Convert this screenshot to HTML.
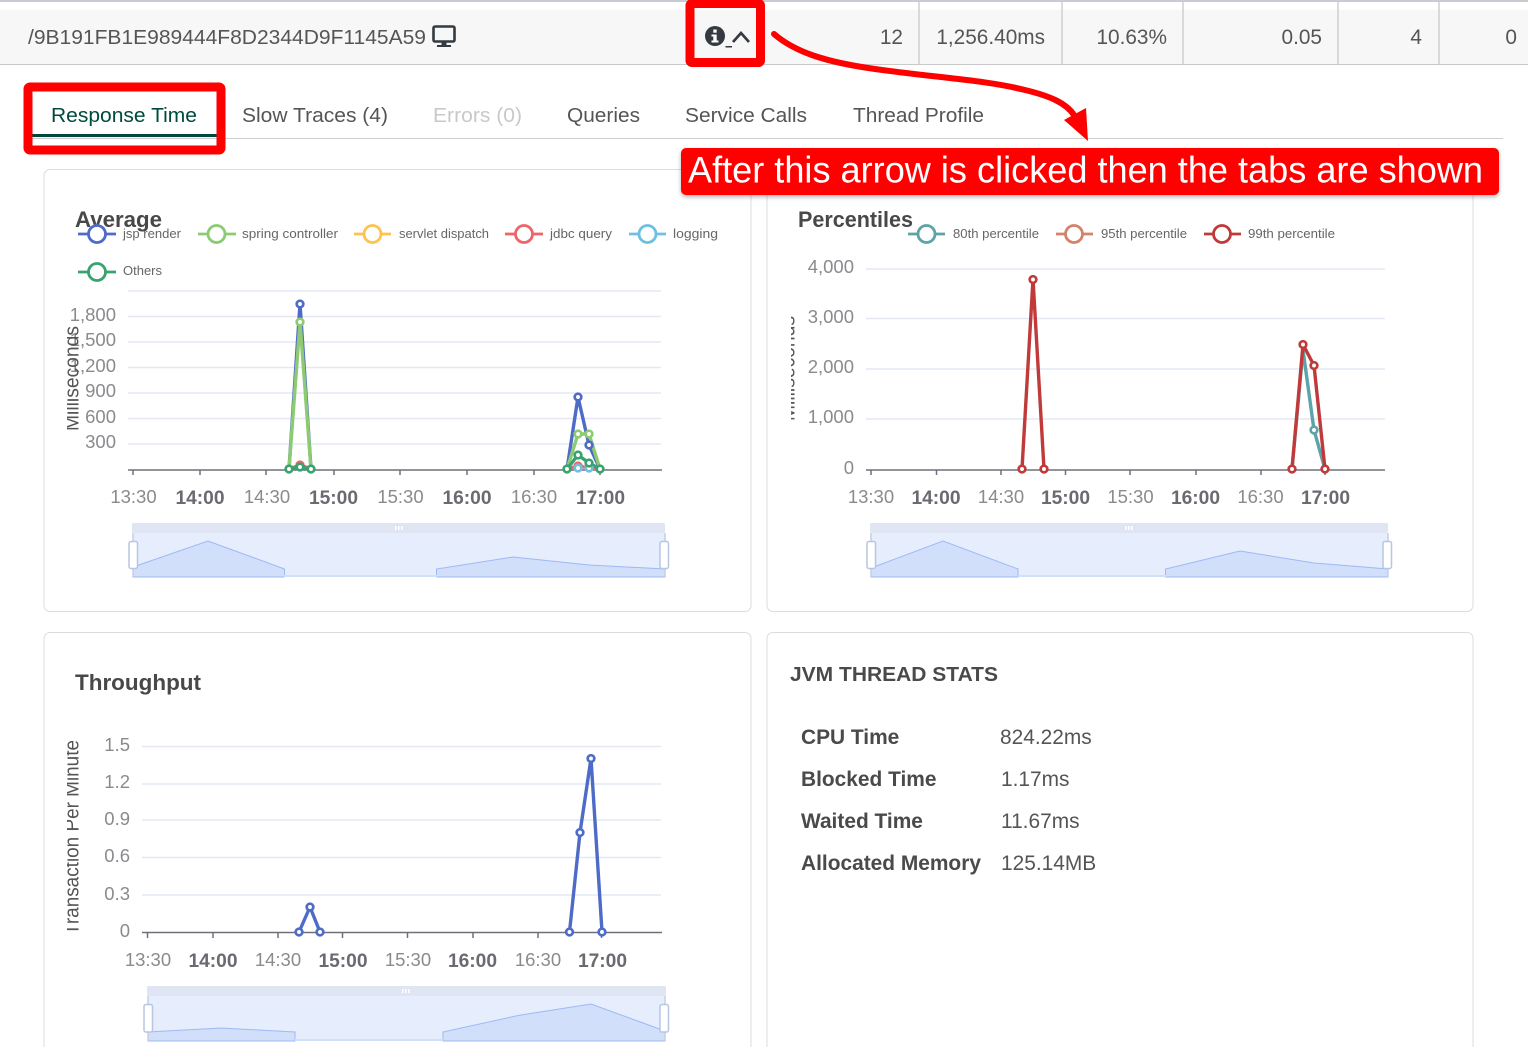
<!DOCTYPE html>
<html><head><meta charset="utf-8"><title>Transaction details</title>
<style>
html,body{margin:0;padding:0;background:#fff;width:1528px;height:1047px;overflow:hidden}
svg{display:block;font-family:"Liberation Sans",sans-serif}
.tab{font-size:20px;fill:#555}
.yl{font-size:18.5px;fill:#8a8a8f;text-anchor:end}
.xl{font-size:18.5px;fill:#8a8a8f;text-anchor:middle}
.xb{font-size:19.2px;fill:#6a6a70;font-weight:bold;text-anchor:middle}
.lg{font-size:13px;fill:#666}
.ttl{font-size:22px;font-weight:bold;fill:#484848}
.hd{font-size:20px;fill:#555}
.hv{font-size:20.8px;fill:#555;text-anchor:end}
.k{font-size:20.9px;font-weight:bold;fill:#4a4a4a}
.v{font-size:20.9px;fill:#555}
.grid{stroke:#e3e8f4;stroke-width:1.5}
.axis{stroke:#6e7079;stroke-width:1.5}
.tk{stroke:#6e7079;stroke-width:1.5}
.yt{font-size:20px;fill:#555}
.s{fill:none;stroke-width:3.4;stroke-linejoin:round}
.m circle{fill:#fff;stroke-width:2.7}
.lgi circle{fill:#fff;stroke-width:2.8}
.lgi line{stroke-width:2.8}
.bar{fill:#dfe5f2}
.body{fill:#e6edfc}
.side{stroke:#c5cfe4;stroke-width:1.5}
.area{fill:#d2dffb;stroke:#9db9f5;stroke-width:1}
.hnd{fill:#fff;stroke:#b9c6e2;stroke-width:1.5}
.grip{fill:#fff}
</style></head><body>
<svg width="1528" height="1047" viewBox="0 0 1528 1047" xmlns="http://www.w3.org/2000/svg">
<defs>
<clipPath id="c1"><rect x="67" y="300" width="30" height="150"/></clipPath>
<clipPath id="c2"><rect x="791" y="290" width="30" height="150"/></clipPath>
<clipPath id="c3"><rect x="67" y="720" width="30" height="230"/></clipPath>
<filter id="sh" x="-2%" y="-20%" width="104%" height="150%"><feDropShadow dx="0" dy="2" stdDeviation="2" flood-color="#000" flood-opacity=".3"/></filter>
</defs>

<!-- header row -->
<rect x="0" y="0" width="1528" height="2" fill="#c8ccd2"/>
<rect x="0" y="10" width="1528" height="54" fill="#f7f7f7"/>
<rect x="0" y="64" width="1528" height="1" fill="#c9c9c9"/>
<g stroke="#cfcfcf" stroke-width="1.5"><line x1="919" y1="2" x2="919" y2="64"/><line x1="1062" y1="2" x2="1062" y2="64"/><line x1="1183" y1="2" x2="1183" y2="64"/><line x1="1338" y1="2" x2="1338" y2="64"/><line x1="1439" y1="2" x2="1439" y2="64"/></g>
<text class="hd" x="28" y="44" textLength="398" lengthAdjust="spacingAndGlyphs">/9B191FB1E989444F8D2344D9F1145A59</text>
<rect x="433.5" y="26.5" width="21" height="15" rx="1.5" fill="none" stroke="#343a40" stroke-width="2.6"/>
<rect x="441.5" y="42" width="5" height="3" fill="#343a40"/><rect x="437" y="45" width="14" height="2" fill="#343a40"/>
<text class="hv" x="903" y="44">12</text>
<text class="hv" x="1045" y="44">1,256.40ms</text>
<text class="hv" x="1167" y="44">10.63%</text>
<text class="hv" x="1322" y="44">0.05</text>
<text class="hv" x="1422" y="44">4</text>
<text class="hv" x="1517" y="44">0</text>
<circle cx="715" cy="36" r="10" fill="#343a40"/>
<rect x="713.3" y="29.5" width="3.4" height="3.2" fill="#fff"/><path d="M711.5 34.5h5.2v6h1.8v2h-7v-2h1.8v-4h-1.8z" fill="#fff"/>
<rect x="725.5" y="46" width="6.5" height="1.5" fill="#343a40"/>
<polyline points="733,42 741,33 749,42" fill="none" stroke="#343a40" stroke-width="2.7"/>

<!-- tabs -->
<line x1="32" y1="138.5" x2="1503" y2="138.5" stroke="#cfcfcf" stroke-width="1"/>
<text class="tab" x="51" y="122" textLength="146" lengthAdjust="spacingAndGlyphs" style="fill:#00493e">Response Time</text>
<rect x="32" y="134" width="185" height="3" fill="#00483c"/>
<text class="tab" x="242" y="122" textLength="146" lengthAdjust="spacingAndGlyphs">Slow Traces (4)</text>
<text class="tab" x="433" y="122" textLength="89" lengthAdjust="spacingAndGlyphs" style="fill:#c9c9c9">Errors (0)</text>
<text class="tab" x="567" y="122" textLength="73" lengthAdjust="spacingAndGlyphs">Queries</text>
<text class="tab" x="685" y="122" textLength="122" lengthAdjust="spacingAndGlyphs">Service Calls</text>
<text class="tab" x="853" y="122" textLength="131" lengthAdjust="spacingAndGlyphs">Thread Profile</text>

<!-- cards -->
<g fill="#fff" stroke="#dcdcdc" stroke-width="1">
<rect x="44" y="169.500" width="707" height="442" rx="6"/>
<rect x="767" y="169.500" width="706" height="442" rx="6"/>
<rect x="44" y="632.500" width="707" height="430" rx="6"/>
<rect x="767" y="632.500" width="706" height="430" rx="6"/>
</g>

<!-- CHART 1 -->
<text class="ttl" x="75" y="227" textLength="87" lengthAdjust="spacingAndGlyphs">Average</text>
<g class="lgi">
<g stroke="#4e6bc8"><line x1="78" y1="234" x2="116" y2="234"/><circle cx="97" cy="234" r="8.5"/></g>
<g stroke="#8ccb72"><line x1="198" y1="234" x2="236" y2="234"/><circle cx="216.500" cy="234" r="8.5"/></g>
<g stroke="#fdc34f"><line x1="354" y1="234" x2="391" y2="234"/><circle cx="372.500" cy="234" r="8.5"/></g>
<g stroke="#ee6469"><line x1="505" y1="234" x2="543" y2="234"/><circle cx="524" cy="234" r="8.5"/></g>
<g stroke="#6fbfe0"><line x1="629" y1="234" x2="666" y2="234"/><circle cx="647.500" cy="234" r="8.5"/></g>
<g stroke="#37a36f"><line x1="78" y1="272" x2="116" y2="272"/><circle cx="97" cy="272" r="8.5"/></g>
</g>
<text class="lg" x="123" y="238" textLength="58" lengthAdjust="spacingAndGlyphs">jsp render</text>
<text class="lg" x="242" y="238" textLength="96" lengthAdjust="spacingAndGlyphs">spring controller</text>
<text class="lg" x="399" y="238" textLength="90" lengthAdjust="spacingAndGlyphs">servlet dispatch</text>
<text class="lg" x="550" y="238" textLength="62" lengthAdjust="spacingAndGlyphs">jdbc query</text>
<text class="lg" x="673" y="238" textLength="45" lengthAdjust="spacingAndGlyphs">logging</text>
<text class="lg" x="123" y="275" textLength="39" lengthAdjust="spacingAndGlyphs">Others</text>

<g class="grid"><line x1="128" y1="291" x2="661" y2="291"/><line x1="128" y1="316.500" x2="661" y2="316.500"/><line x1="128" y1="342" x2="661" y2="342"/><line x1="128" y1="367.500" x2="661" y2="367.500"/><line x1="128" y1="393" x2="661" y2="393"/><line x1="128" y1="418.500" x2="661" y2="418.500"/><line x1="128" y1="444" x2="661" y2="444"/></g>
<text class="yl" x="116" y="321">1,800</text><text class="yl" x="116" y="346">1,500</text><text class="yl" x="116" y="372">1,200</text><text class="yl" x="116" y="397">900</text><text class="yl" x="116" y="423">600</text><text class="yl" x="116" y="448">300</text>
<g clip-path="url(#c1)"><text class="yt" transform="translate(78.500,431) rotate(-90)" textLength="105" lengthAdjust="spacingAndGlyphs">Milliseconds</text></g>
<line class="axis" x1="128" y1="470" x2="662" y2="470"/>
<g class="tk"><line x1="133" y1="470" x2="133" y2="475"/><line x1="200" y1="470" x2="200" y2="475"/><line x1="266" y1="470" x2="266" y2="475"/><line x1="334" y1="470" x2="334" y2="475"/><line x1="400" y1="470" x2="400" y2="475"/><line x1="467" y1="470" x2="467" y2="475"/><line x1="534" y1="470" x2="534" y2="475"/><line x1="600" y1="470" x2="600" y2="475"/></g>
<text class="xl" x="133.5" y="503">13:30</text><text class="xb" x="200" y="504">14:00</text><text class="xl" x="267" y="503">14:30</text><text class="xb" x="333.500" y="504">15:00</text><text class="xl" x="400.500" y="503">15:30</text><text class="xb" x="467" y="504">16:00</text><text class="xl" x="534" y="503">16:30</text><text class="xb" x="600.500" y="504">17:00</text>

<polyline class="s" stroke="#4e6bc8" points="289,469 300,304 311,469"/>
<polyline class="s" stroke="#4e6bc8" points="567,469 578,397 589,445 600,469"/>
<polyline class="s" stroke="#8ccb72" points="289,469 300,322 311,469"/>
<polyline class="s" stroke="#8ccb72" points="567,469 578,434 589,434 600,469"/>
<polyline class="s" stroke="#ee6469" points="289,469 300,465 311,469"/>
<polyline class="s" stroke="#ee6469" points="567,469 578,466 589,468 600,469"/>
<polyline class="s" stroke="#37a36f" points="289,469 300,467 311,469"/>
<polyline class="s" stroke="#37a36f" points="567,469 578,455 589,463 600,469"/>
<g class="m">
<g stroke="#4e6bc8"><circle cx="300" cy="304" r="3.3"/><circle cx="578" cy="397" r="3.3"/><circle cx="589" cy="445" r="3.3"/></g>
<g stroke="#8ccb72"><circle cx="300" cy="322" r="3.3"/><circle cx="578" cy="434" r="3.3"/><circle cx="589" cy="434" r="3.3"/></g>
<g stroke="#ee6469"><circle cx="300" cy="465" r="3.3"/><circle cx="578" cy="466" r="3.3"/></g>
<g stroke="#6fbfe0"><circle cx="578" cy="468" r="3.3"/><circle cx="589" cy="468" r="3.3"/></g>
<g stroke="#37a36f"><circle cx="289" cy="469" r="3.3"/><circle cx="300" cy="467" r="3.3"/><circle cx="311" cy="469" r="3.3"/><circle cx="567" cy="469" r="3.3"/><circle cx="578" cy="455" r="3.3"/><circle cx="589" cy="463" r="3.3"/><circle cx="600" cy="469" r="3.3"/></g>
</g>
<rect class="bar" x="132" y="523" width="533" height="10" rx="1.5"/>
<rect class="body" x="133" y="533" width="532" height="44"/>
<polygon class="area" points="133,567 208,541 284.500,569 284.500,577 133,577"/>
<polygon class="area" points="436.500,577 436.500,569 513,557 589,565 665,569 665,577"/>
<line x1="284" y1="576" x2="437" y2="576" stroke="#d2dffb" stroke-width="2"/>
<line class="side" x1="133" y1="533" x2="133" y2="577"/><line class="side" x1="665" y1="533" x2="665" y2="577"/>
<rect class="hnd" x="129" y="541.500" width="8.5" height="27" rx="2"/><rect class="hnd" x="660" y="541.500" width="8.5" height="27" rx="2"/>
<g class="grip"><rect x="395" y="526" width="1.5" height="4"/><rect x="398" y="526" width="1.5" height="4"/><rect x="401" y="526" width="1.5" height="4"/></g>

<!-- CHART 2 -->
<text class="ttl" x="798" y="227" textLength="115" lengthAdjust="spacingAndGlyphs">Percentiles</text>
<g class="lgi">
<g stroke="#5da3a8"><line x1="908" y1="234" x2="945" y2="234"/><circle cx="926.500" cy="234" r="8.5"/></g>
<g stroke="#d4826a"><line x1="1056" y1="234" x2="1093" y2="234"/><circle cx="1074" cy="234" r="8.5"/></g>
<g stroke="#c03a3a"><line x1="1204" y1="234" x2="1241" y2="234"/><circle cx="1222" cy="234" r="8.5"/></g>
</g>
<text class="lg" x="953" y="238" textLength="86" lengthAdjust="spacingAndGlyphs">80th percentile</text>
<text class="lg" x="1101" y="238" textLength="86" lengthAdjust="spacingAndGlyphs">95th percentile</text>
<text class="lg" x="1248" y="238" textLength="87" lengthAdjust="spacingAndGlyphs">99th percentile</text>
<g class="grid"><line x1="866" y1="269" x2="1385" y2="269"/><line x1="866" y1="318.500" x2="1385" y2="318.500"/><line x1="866" y1="369" x2="1385" y2="369"/><line x1="866" y1="419" x2="1385" y2="419"/></g>
<g clip-path="url(#c2)"><text class="yt" transform="translate(794.500,421) rotate(-90)" textLength="105" lengthAdjust="spacingAndGlyphs">Milliseconds</text></g>
<text class="yl" x="854" y="273">4,000</text><text class="yl" x="854" y="323">3,000</text><text class="yl" x="854" y="373">2,000</text><text class="yl" x="854" y="423">1,000</text><text class="yl" x="854" y="474">0</text>
<line class="axis" x1="866" y1="470" x2="1385" y2="470"/>
<g class="tk"><line x1="871" y1="470" x2="871" y2="475"/><line x1="936.500" y1="470" x2="936.500" y2="475"/><line x1="1001" y1="470" x2="1001" y2="475"/><line x1="1065.500" y1="470" x2="1065.500" y2="475"/><line x1="1130" y1="470" x2="1130" y2="475"/><line x1="1196" y1="470" x2="1196" y2="475"/><line x1="1261" y1="470" x2="1261" y2="475"/><line x1="1325" y1="470" x2="1325" y2="475"/></g>
<text class="xl" x="871" y="503">13:30</text><text class="xb" x="936" y="504">14:00</text><text class="xl" x="1001" y="503">14:30</text><text class="xb" x="1065.500" y="504">15:00</text><text class="xl" x="1130.500" y="503">15:30</text><text class="xb" x="1195.500" y="504">16:00</text><text class="xl" x="1260.500" y="503">16:30</text><text class="xb" x="1325.500" y="504">17:00</text>
<polyline class="s" stroke="#5da3a8" points="1292,469 1303,350 1314,430 1325,469"/>
<polyline class="s" stroke="#c03a3a" points="1022,469 1033,279 1044,469"/>
<polyline class="s" stroke="#c03a3a" points="1292,469 1303,344.500 1314,365.500 1325,469"/>
<g class="m">
<circle stroke="#5da3a8" cx="1314" cy="430" r="3.3"/>
<g stroke="#c03a3a"><circle cx="1022" cy="469" r="3.3"/><circle cx="1033" cy="279.500" r="3.3"/><circle cx="1044" cy="469" r="3.3"/><circle cx="1292" cy="469" r="3.3"/><circle cx="1303" cy="344.500" r="3.3"/><circle cx="1314" cy="365.500" r="3.3"/><circle cx="1325" cy="469" r="3.3"/></g>
</g>
<rect class="bar" x="870" y="523" width="518" height="10" rx="1.5"/>
<rect class="body" x="871" y="533" width="517" height="44"/>
<polygon class="area" points="871,568 943,541 1018,569 1018,577 871,577"/>
<polygon class="area" points="1165.500,577 1165.500,569 1240,551 1314,563 1388,569 1388,577"/>
<line x1="1018" y1="576" x2="1166" y2="576" stroke="#d2dffb" stroke-width="2"/>
<line class="side" x1="871" y1="533" x2="871" y2="577"/><line class="side" x1="1388" y1="533" x2="1388" y2="577"/>
<rect class="hnd" x="867" y="541.500" width="8.5" height="27" rx="2"/><rect class="hnd" x="1383" y="541.500" width="8.5" height="27" rx="2"/>
<g class="grip"><rect x="1125" y="526" width="1.5" height="4"/><rect x="1128" y="526" width="1.5" height="4"/><rect x="1131" y="526" width="1.5" height="4"/></g>

<!-- CHART 3 -->
<text class="ttl" x="75" y="690" textLength="126" lengthAdjust="spacingAndGlyphs">Throughput</text>
<g class="grid"><line x1="142" y1="746.500" x2="661" y2="746.500"/><line x1="142" y1="784" x2="661" y2="784"/><line x1="142" y1="820" x2="661" y2="820"/><line x1="142" y1="857.500" x2="661" y2="857.500"/><line x1="142" y1="895" x2="661" y2="895"/></g>
<g clip-path="url(#c3)"><text class="yt" transform="translate(78.500,935) rotate(-90)" textLength="195" lengthAdjust="spacingAndGlyphs">Transaction Per Minute</text></g>
<text class="yl" x="130" y="751">1.5</text><text class="yl" x="130" y="788">1.2</text><text class="yl" x="130" y="825">0.9</text><text class="yl" x="130" y="862">0.6</text><text class="yl" x="130" y="900">0.3</text><text class="yl" x="130" y="937">0</text>
<line class="axis" x1="142" y1="932.500" x2="662" y2="932.500"/>
<g class="tk"><line x1="147.500" y1="932" x2="147.500" y2="938"/><line x1="213" y1="932" x2="213" y2="938"/><line x1="278" y1="932" x2="278" y2="938"/><line x1="342.500" y1="932" x2="342.500" y2="938"/><line x1="407.500" y1="932" x2="407.500" y2="938"/><line x1="473" y1="932" x2="473" y2="938"/><line x1="538" y1="932" x2="538" y2="938"/><line x1="601.500" y1="932" x2="601.500" y2="938"/></g>
<text class="xl" x="148" y="966">13:30</text><text class="xb" x="213" y="967">14:00</text><text class="xl" x="278" y="966">14:30</text><text class="xb" x="343" y="967">15:00</text><text class="xl" x="408" y="966">15:30</text><text class="xb" x="472.500" y="967">16:00</text><text class="xl" x="538" y="966">16:30</text><text class="xb" x="602.500" y="967">17:00</text>
<polyline class="s" stroke="#4e6bc8" points="299,932 310,907 320,932"/>
<polyline class="s" stroke="#4e6bc8" points="569.500,932 580,832.500 591,758.500 602,932"/>
<g class="m" stroke="#4e6bc8"><circle cx="299" cy="932" r="3.3"/><circle cx="310" cy="907" r="3.3"/><circle cx="320" cy="932" r="3.3"/><circle cx="569.500" cy="932" r="3.3"/><circle cx="580" cy="832.500" r="3.3"/><circle cx="591" cy="758.500" r="3.3"/><circle cx="602" cy="932" r="3.3"/></g>
<rect class="bar" x="147" y="986" width="519" height="10" rx="1.5"/>
<rect class="body" x="148" y="996" width="517" height="45"/>
<polygon class="area" points="148,1032 221,1028 295,1032 295,1041 148,1041"/>
<polygon class="area" points="443,1041 443,1032 518,1015.500 591,1004 665,1031 665,1041"/>
<line x1="295" y1="1040" x2="443" y2="1040" stroke="#d2dffb" stroke-width="2"/>
<line class="side" x1="148" y1="996" x2="148" y2="1041"/><line class="side" x1="665" y1="996" x2="665" y2="1041"/>
<rect class="hnd" x="144" y="1004.500" width="8.5" height="27.500" rx="2"/><rect class="hnd" x="660" y="1004.500" width="8.5" height="27.500" rx="2"/>
<g class="grip"><rect x="402" y="989" width="1.5" height="4"/><rect x="405" y="989" width="1.5" height="4"/><rect x="408" y="989" width="1.5" height="4"/></g>

<!-- JVM stats -->
<text x="790" y="681" font-size="20" font-weight="bold" fill="#4a4a4a" textLength="208" lengthAdjust="spacingAndGlyphs">JVM THREAD STATS</text>
<text class="k" x="801" y="744">CPU Time</text><text class="v" x="1000" y="744">824.22ms</text>
<text class="k" x="801" y="786">Blocked Time</text><text class="v" x="1001" y="786">1.17ms</text>
<text class="k" x="801" y="828">Waited Time</text><text class="v" x="1001" y="828">11.67ms</text>
<text class="k" x="801" y="870">Allocated Memory</text><text class="v" x="1001" y="870">125.14MB</text>

<!-- annotations -->
<rect x="690" y="3.500" width="70.500" height="59" rx="2" fill="none" stroke="#ff0000" stroke-width="9"/>
<rect x="28" y="87" width="193" height="63" rx="2" fill="none" stroke="#ff0000" stroke-width="9"/>
<path d="M774 34 C 795 52, 825 62, 875 69 C 940 78, 985 80, 1025 90 C 1050 96, 1066 103, 1074 115" fill="none" stroke="#ff0000" stroke-width="6" stroke-linecap="round"/>
<polygon points="1064,120 1086,108 1088,141" fill="#ff0000"/>
<rect x="681" y="148" width="818" height="47" rx="5" fill="#ff0000" filter="url(#sh)"/>
<text x="688" y="182.500" font-size="37.500" fill="#fff" textLength="795" lengthAdjust="spacingAndGlyphs">After this arrow is clicked then the tabs are shown</text>
</svg>
</body></html>
